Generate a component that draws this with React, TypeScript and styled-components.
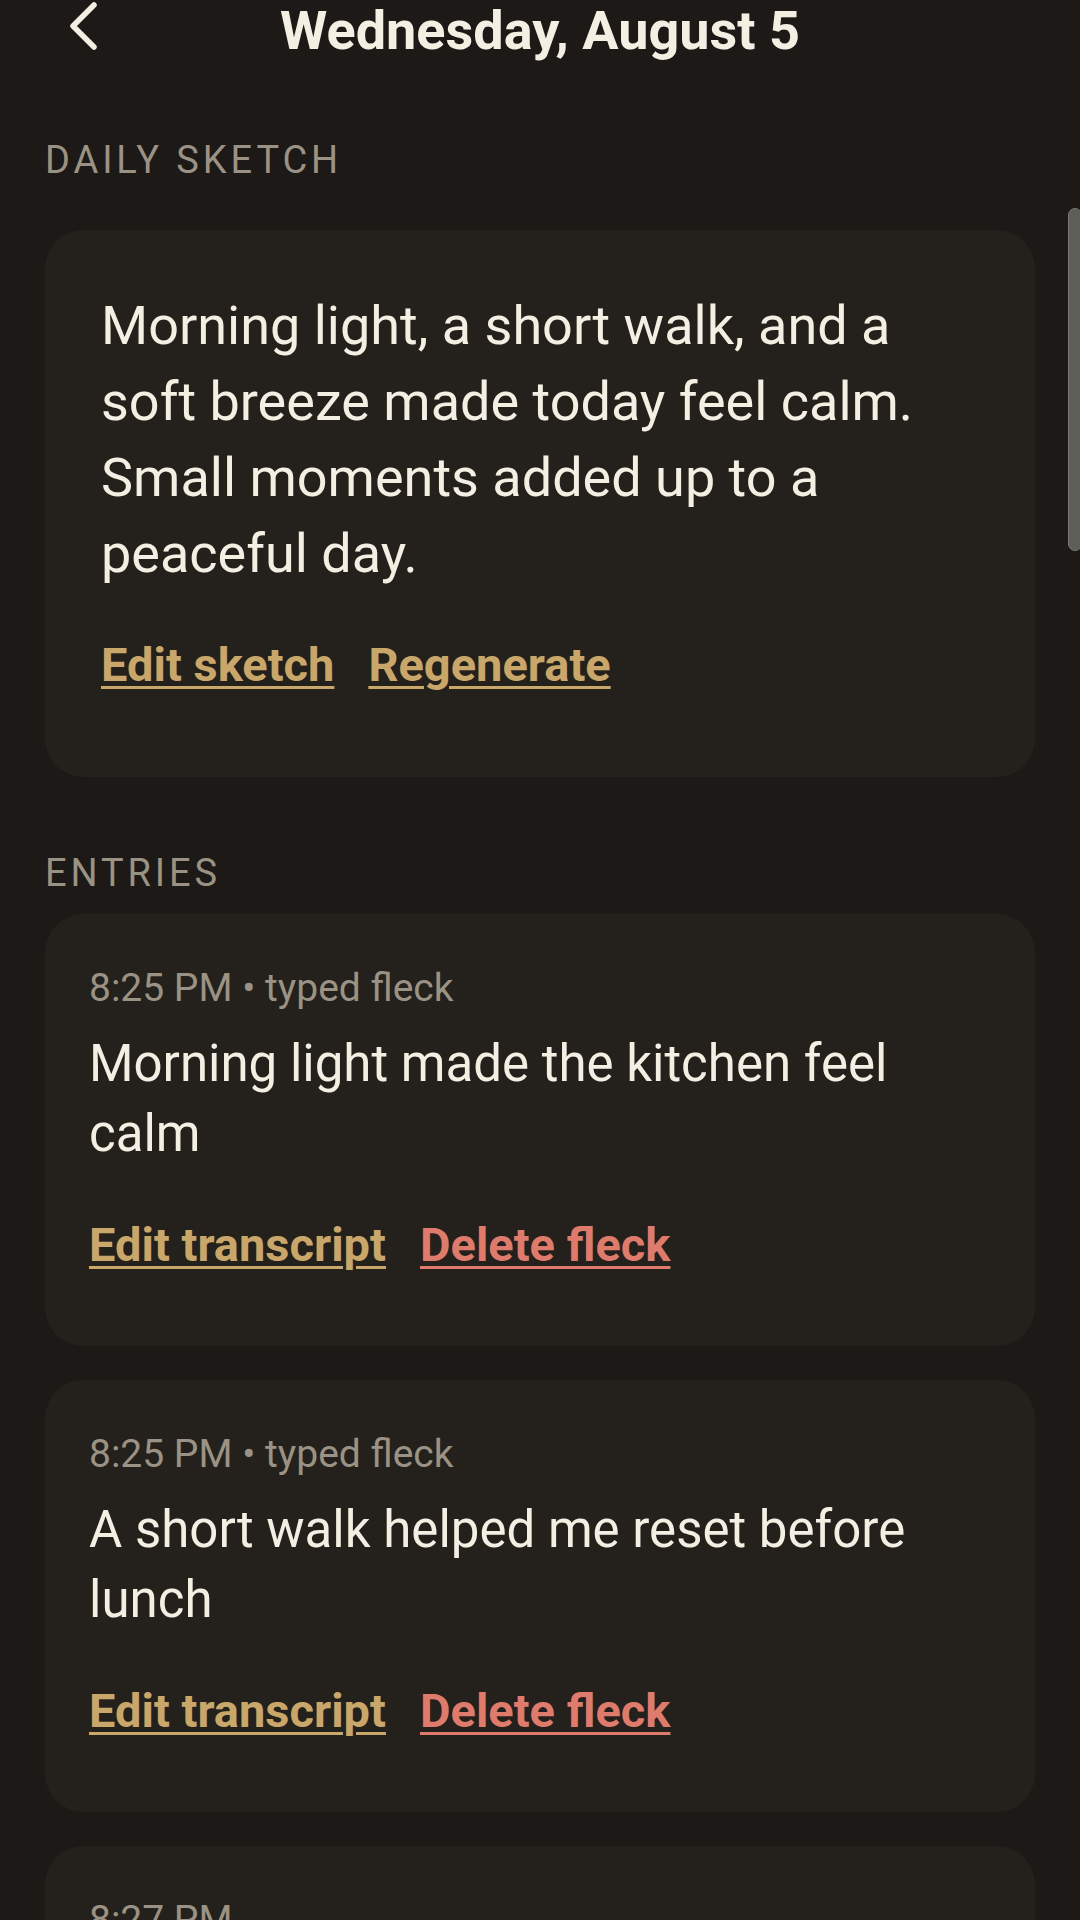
import React from "react";
import styled, { createGlobalStyle } from "styled-components";

const Global = createGlobalStyle`
  html, body {
    margin: 0;
    padding: 0;
    background: #1c1916;
    overflow: hidden;
  }
  * { box-sizing: border-box; }
`;

const Page = styled.div`
  position: relative;
  width: 1080px;
  height: 1920px;
  overflow: hidden;
  background: #1c1916;
  font-family: Roboto, "Noto Sans", sans-serif;
  color: #f3efe3;
`;

const Header = styled.header`
  display: grid;
  grid-template-columns: 1fr auto 1fr;
  align-items: start;
  height: 60px;
  padding-top: 1px;
`;

const BackButton = styled.button`
  justify-self: start;
  background: none;
  border: none;
  padding: 0 0 0 67px;
  margin: 0;
  height: 52px;
  display: flex;
  align-items: flex-start;
  cursor: pointer;
`;

const Title = styled.h1`
  margin: 0;
  font-size: 54px;
  line-height: 59px;
  font-weight: 700;
  color: #f3efe3;
  white-space: nowrap;
`;

const Content = styled.main`
  display: flex;
  flex-direction: column;
  padding: 0 45px;
`;

const SectionLabel = styled.div<{ $top: number; $bottom: number }>`
  margin-top: ${(p) => p.$top}px;
  margin-bottom: ${(p) => p.$bottom}px;
  font-size: 38px;
  line-height: 44px;
  letter-spacing: 3.9px;
  color: #9a9385;
  text-transform: uppercase;
`;

const Card = styled.section<{ $pad: string }>`
  background: #24201b;
  border-radius: 38px;
  padding: ${(p) => p.$pad};
  display: flex;
  flex-direction: column;
`;

const SketchText = styled.p`
  margin: 0;
  font-size: 54px;
  line-height: 76px;
  color: #f3efe3;
`;

const Meta = styled.div`
  font-size: 39px;
  line-height: 46px;
  color: #9a9385;
`;

const EntryText = styled.p`
  margin: 18px 0 0;
  font-size: 51px;
  line-height: 70px;
  color: #f3efe3;
`;

const Actions = styled.div<{ $top: number }>`
  display: flex;
  gap: 34px;
  margin-top: ${(p) => p.$top}px;
`;

const LinkButton = styled.button<{ $color: string }>`
  background: none;
  border: none;
  padding: 0;
  margin: 0;
  font-family: Roboto, "Noto Sans", sans-serif;
  font-size: 47px;
  line-height: 55px;
  font-weight: 700;
  color: ${(p) => p.$color};
  text-decoration: underline;
  text-decoration-thickness: 3px;
  text-underline-offset: 5px;
  cursor: pointer;
`;

const EntryList = styled.div`
  display: flex;
  flex-direction: column;
  gap: 34px;
`;

const ScrollThumb = styled.div`
  position: absolute;
  right: -2px;
  top: 208px;
  width: 14px;
  height: 343px;
  border-radius: 8px;
  background: #5e5d59;
  border: 1.5px solid #7b7a75;
`;

const GOLD = "#c9a76a";
const RED = "#de7b6d";

type Entry = { time: string; kind?: string; text: string };

const entries: Entry[] = [
  { time: "8:25 PM", kind: "typed fleck", text: "Morning light made the kitchen feel calm" },
  { time: "8:25 PM", kind: "typed fleck", text: "A short walk helped me reset before lunch" },
  { time: "8:27 PM", text: "A soft breeze came through the window" },
];

export default function App() {
  return (
    <Page>
      <Global />
      <Header>
        <BackButton aria-label="Back">
          <svg width="32" height="52" viewBox="0 0 32 52" fill="none">
            <path
              d="M27 4 L6 25 L27 46"
              stroke="#f3efe3"
              strokeWidth="5.5"
              strokeLinecap="round"
              strokeLinejoin="round"
            />
          </svg>
        </BackButton>
        <Title>Wednesday, August 5</Title>
        <div />
      </Header>
      <Content>
        <SectionLabel $top={78} $bottom={48}>Daily sketch</SectionLabel>
        <Card $pad="58px 60px 85px 56px">
          <SketchText>
            Morning light, a short walk, and a soft breeze made today feel calm. Small moments added up to a
            peaceful day.
          </SketchText>
          <Actions $top={45}>
            <LinkButton $color={GOLD}>Edit sketch</LinkButton>
            <LinkButton $color={GOLD}>Regenerate</LinkButton>
          </Actions>
        </Card>
        <SectionLabel $top={74} $bottom={19}>Entries</SectionLabel>
        <EntryList>
          {entries.map((e, i) => (
            <Card key={i} $pad="51px 44px 74px 44px">
              <Meta>
                {e.time}
                {e.kind ? ` • ${e.kind}` : ""}
              </Meta>
              <EntryText>{e.text}</EntryText>
              <Actions $top={48}>
                <LinkButton $color={GOLD}>Edit transcript</LinkButton>
                <LinkButton $color={RED}>Delete fleck</LinkButton>
              </Actions>
            </Card>
          ))}
        </EntryList>
      </Content>
      <ScrollThumb />
    </Page>
  );
}
